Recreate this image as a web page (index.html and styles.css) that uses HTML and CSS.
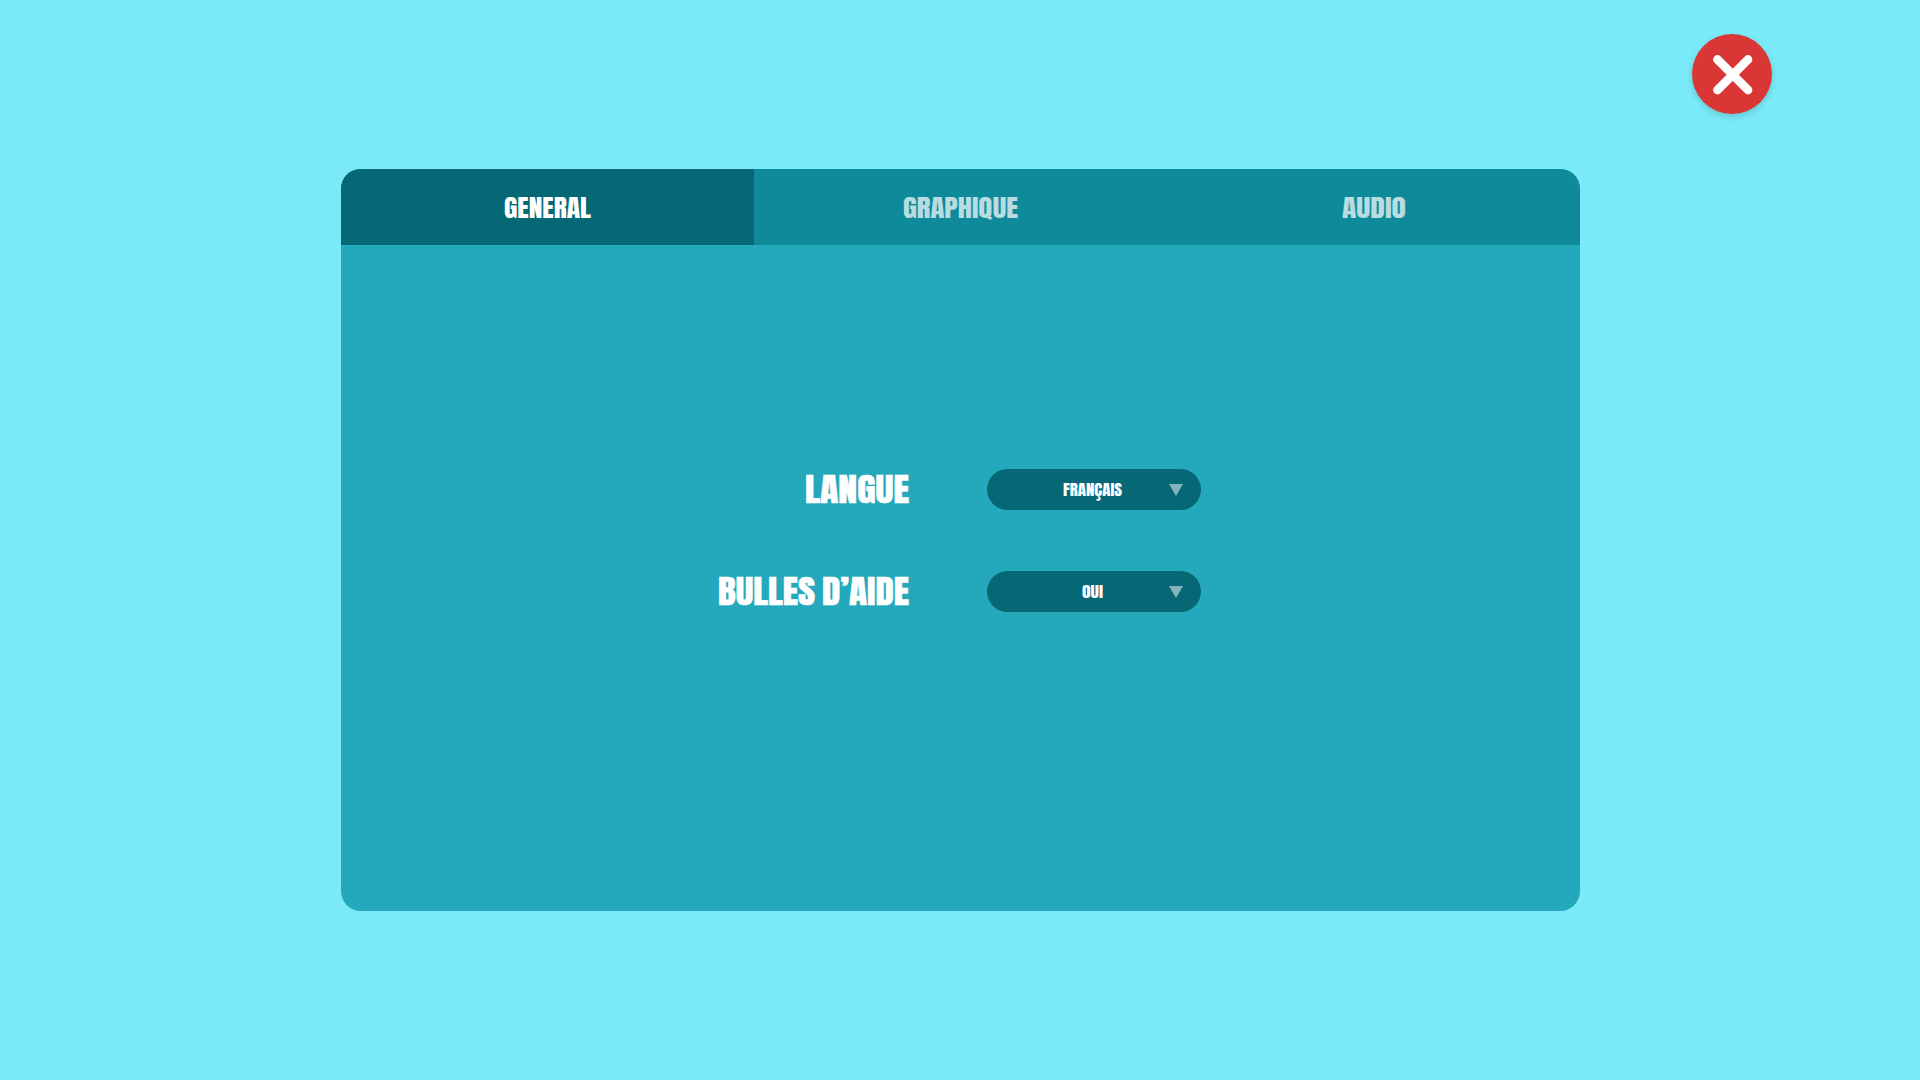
FILE: index.html
```
<!DOCTYPE html>
<html lang="fr">
<head>
<meta charset="utf-8">
<title>Options</title>
<link rel="stylesheet" href="styles.css">
</head>
<body>
<header class="topbar">
  <button class="close" aria-label="Fermer">
    <svg width="80" height="80" viewBox="0 0 80 80"><path d="M25.5 25.5 56 56M56 25.5 25.5 56"/></svg>
  </button>
</header>
<main class="panel">
  <nav class="tabs">
    <a class="tab tab-active"><svg class="label" width="87" height="30"><text x="0" y="25" textLength="87" lengthAdjust="spacingAndGlyphs">GENERAL</text></svg></a>
    <a class="tab"><svg class="label" width="115" height="30"><text x="0" y="25" textLength="115" lengthAdjust="spacingAndGlyphs">GRAPHIQUE</text></svg></a>
    <a class="tab"><svg class="label" width="64" height="30"><text x="0" y="25" textLength="64" lengthAdjust="spacingAndGlyphs">AUDIO</text></svg></a>
  </nav>
  <section class="settings">
    <div class="row">
      <svg class="name" width="104" height="41"><text x="0" y="34" textLength="104" lengthAdjust="spacingAndGlyphs">LANGUE</text></svg>
      <div class="select">
        <svg class="value" width="59" height="41"><text x="0" y="26.8" textLength="59" lengthAdjust="spacingAndGlyphs">FRANÇAIS</text></svg>
        <svg class="arrow" width="14" height="12"><path d="M0 0H14L7 12Z"/></svg>
      </div>
    </div>
    <div class="row">
      <svg class="name" width="191" height="41"><text x="0" y="34" textLength="191" lengthAdjust="spacingAndGlyphs">BULLES D’AIDE</text></svg>
      <div class="select">
        <svg class="value" width="21" height="41"><text x="0" y="26.8" textLength="21" lengthAdjust="spacingAndGlyphs">OUI</text></svg>
        <svg class="arrow" width="14" height="12"><path d="M0 0H14L7 12Z"/></svg>
      </div>
    </div>
  </section>
</main>
</body>
</html>
```
FILE: styles.css
```
* { box-sizing: border-box; }

body {
  margin: 0;
  height: 1080px;
  overflow: hidden;
  background: #7aeaf8;
  font-family: Anton, Impact, Roboto, sans-serif;
}

svg { display: block; overflow: visible; }
text { fill: #fff; }

.topbar {
  display: flex;
  justify-content: flex-end;
  height: 169px;
  padding: 34px 148px 0 0;
}

.close {
  width: 80px;
  height: 80px;
  padding: 0;
  border: 0;
  border-radius: 50%;
  background: #da3636;
  box-shadow: 0 3px 6px rgba(0, 0, 0, .16);
}

.close path {
  fill: none;
  stroke: #fff;
  stroke-width: 8.8;
  stroke-linecap: round;
}

.panel {
  display: flex;
  flex-direction: column;
  width: 1239px;
  height: 742px;
  margin-left: 341px;
  border-radius: 20px;
  overflow: hidden;
  background: #24a8bb;
}

.tabs {
  display: grid;
  grid-template-columns: repeat(3, 1fr);
  height: 76px;
  background: #0f8a9a;
}

.tab {
  display: flex;
  justify-content: center;
  padding-top: 24px;
}

.tab-active { background: #066775; }
.label { font-size: 24.7px; }
.tab text { opacity: .7; }
.tab-active text { opacity: 1; }

.settings {
  display: flex;
  flex-direction: column;
  gap: 61px;
  padding-top: 224px;
}

.row {
  display: grid;
  grid-template-columns: 568px 214px;
  column-gap: 78px;
  height: 41px;
}

.name {
  justify-self: end;
  font-size: 32.6px;
  word-spacing: -1.6px;
}

.name text {
  stroke: #fff;
  stroke-width: .5;
}

.select {
  display: grid;
  grid-template-columns: 1fr auto 1fr;
  align-items: center;
  padding: 0 18px 0 15px;
  border-radius: 21px;
  background: #066775;
}

.value { grid-column: 2; font-size: 14.6px; }

.arrow {
  justify-self: end;
  fill: #fff;
  opacity: .5;
}
```
